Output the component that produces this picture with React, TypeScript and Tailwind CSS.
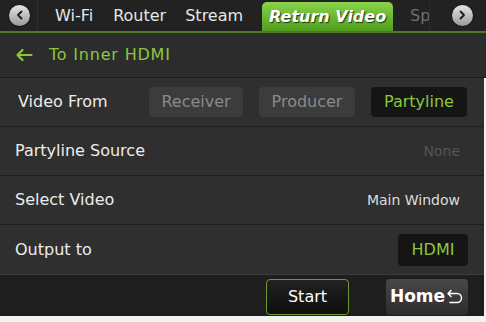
import React from 'react';

const font = { fontFamily: '"DejaVu Sans", Verdana, sans-serif' };

function CircleArrow({ dir }: { dir: 'left' | 'right' }) {
  return (
    <div className="w-[21px] h-[21px] rounded-full bg-gradient-to-b from-[#e4e4e4] to-[#9a9a9a] flex items-center justify-center shadow-[0_0_2px_rgba(0,0,0,0.8)]">
      <svg width="10" height="10" viewBox="0 0 10 10">
        {dir === 'left' ? (
          <path d="M6.5 1.5 L3 5 L6.5 8.5" stroke="#1a1a1a" strokeWidth="1.8" fill="none" strokeLinecap="round" strokeLinejoin="round" />
        ) : (
          <path d="M3.5 1.5 L7 5 L3.5 8.5" stroke="#1a1a1a" strokeWidth="1.8" fill="none" strokeLinecap="round" strokeLinejoin="round" />
        )}
      </svg>
    </div>
  );
}

function Row({ children, last }: { children: React.ReactNode; last?: boolean }) {
  return (
    <div
      className={`h-[49px] flex items-center px-[15px] bg-[#2f2f2f] ${last ? '' : 'border-b border-[#1f1f1f]'}`}
    >
      {children}
    </div>
  );
}

export default function App() {
  return (
    <div className="w-[486px] h-[322px] bg-[#f2f2f2] overflow-hidden" style={font}>
      {/* Tab bar */}
      <div className="h-[31px] bg-[#222222] flex items-end relative">
        <div className="h-full w-[38px] flex items-center justify-center border-r border-[#2e2e2e] pl-[2px] pb-[1px]">
          <CircleArrow dir="left" />
        </div>
        <div className="flex-1 h-full flex items-center overflow-hidden text-[16px] text-[#e6e6e6] whitespace-nowrap">
          <span className="ml-[17px]">Wi-Fi</span>
          <span className="ml-[20px]">Router</span>
          <span className="ml-[19px]">Stream</span>
          <div className="ml-[19px] shrink-0 self-end h-[29px] w-[131px] rounded-t-[5px] bg-gradient-to-b from-[#8ad44a] to-[#4f9e1c] flex items-center justify-center">
            <span
              className="text-white font-bold italic text-[16px]"
              style={{ textShadow: '1px 1px 1px #1e3a08' }}
            >
              Return Video
            </span>
          </div>
          <span className="ml-[17px] text-[#6f6f6f]">Speed</span>
        </div>
        <div className="absolute right-0 top-0 h-full w-[57px] bg-[#222222] border-l border-[#2a2a2a] flex items-center justify-center pb-[1px] pl-[8px]">
          <CircleArrow dir="right" />
        </div>
      </div>
      <div className="h-[2px] bg-[#4d7a2a]" />

      {/* Header */}
      <div className="h-[45px] bg-[#2c2c2c] flex items-center px-[15px] border-b border-[#1c1c1c]">
        <svg width="18" height="14" viewBox="0 0 18 14" className="mr-[16px]">
          <path d="M16.5 7 H2.5 M7.5 2 L2.5 7 L7.5 12" stroke="#8cc63f" strokeWidth="2.2" fill="none" strokeLinecap="round" strokeLinejoin="round" />
        </svg>
        <span className="text-[#8cc63f] text-[16px] tracking-[0.8px]">To Inner HDMI</span>
      </div>

      {/* Content */}
      <div className="mr-[2px]">
        <Row>
          <span className="text-[#ececec] text-[16px] ml-[3px] flex-1">Video From</span>
          <div className="flex gap-[16px] mr-[2px]">
            <div className="w-[94px] h-[30px] rounded-[4px] bg-[#3c3c3c] flex items-center justify-center text-[#8a8a8a] text-[16px]">Receiver</div>
            <div className="w-[96px] h-[30px] rounded-[4px] bg-[#3c3c3c] flex items-center justify-center text-[#8a8a8a] text-[16px]">Producer</div>
            <div className="w-[96px] h-[30px] rounded-[4px] bg-[#151515] flex items-center justify-center text-[#8cc63f] text-[16px]">Partyline</div>
          </div>
        </Row>
        <Row>
          <span className="text-[#ececec] text-[16px] flex-1">Partyline Source</span>
          <span className="text-[#555555] text-[14px] mr-[9px]">None</span>
        </Row>
        <Row>
          <span className="text-[#ececec] text-[16px] flex-1">Select Video</span>
          <span className="text-[#dddddd] text-[14px] mr-[9px]">Main Window</span>
        </Row>
        <Row last>
          <span className="text-[#ececec] text-[16px] flex-1">Output to</span>
          <div className="w-[70px] h-[32px] rounded-[4px] bg-[#151515] flex items-center justify-center text-[#8cc63f] text-[16px] mr-[1px]">HDMI</div>
        </Row>

        {/* Bottom bar */}
        <div className="h-[42px] bg-[#1e1e1e] border-t border-[#3a3a3a] flex items-end pb-[1px] justify-end pr-[16px] gap-[37px]">
          <div className="w-[83px] h-[36px] rounded-[4px] border border-[#6a9a30] bg-gradient-to-b from-[#222222] to-[#0e0e0e] flex items-center justify-center text-white text-[16px]">
            Start
          </div>
          <div className="w-[82px] h-[36px] rounded-[4px] bg-gradient-to-b from-[#484848] to-[#2c2c2c] flex items-center justify-center text-white text-[17px] font-bold gap-[1px]">
            <span>Home</span>
            <svg width="18" height="17" viewBox="0 0 18 17">
              <path d="M5 1.5 L2 4.5 L5 7.5 M2 4.5 H11 A4.5 4.5 0 0 1 11 13.5 H4" stroke="#ffffff" strokeWidth="1.5" fill="none" strokeLinecap="round" strokeLinejoin="round" />
            </svg>
          </div>
        </div>
      </div>
    </div>
  );
}
